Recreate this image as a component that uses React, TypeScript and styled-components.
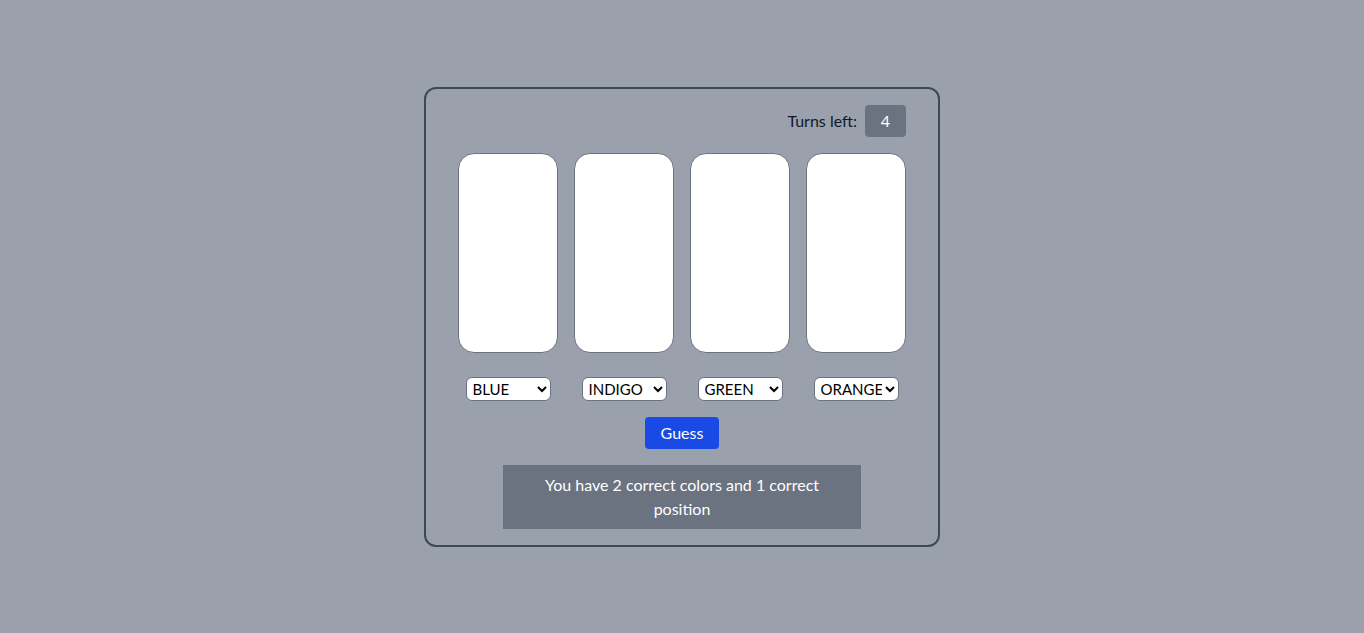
import React, { useState } from 'react';
import styled, { createGlobalStyle } from 'styled-components';

const GlobalStyle = createGlobalStyle`
  body {
    margin: 0;
    padding: 0;
    font-family: Lato, 'Noto Sans', sans-serif;
    background: #9aa1ad;
    color: #111827;
  }
`;

const Page = styled.div`
  min-height: 100vh;
  display: flex;
  align-items: center;
  justify-content: center;
`;

const Board = styled.div`
  width: 512px;
  box-sizing: content-box;
  border: 2px solid #3f4856;
  border-radius: 12px;
  padding: 16px 0;
  display: flex;
  flex-direction: column;
  align-items: center;
  gap: 16px;
`;

const TopBar = styled.div`
  align-self: stretch;
  display: flex;
  justify-content: flex-end;
  align-items: center;
  gap: 8px;
  padding: 0 32px;
  font-size: 16px;
`;

const TurnsBadge = styled.span`
  background: #6b7280;
  color: #fff;
  border-radius: 4px;
  width: 41px;
  height: 32px;
  display: flex;
  align-items: center;
  justify-content: center;
`;

const SlotGrid = styled.div`
  align-self: stretch;
  display: grid;
  grid-template-columns: repeat(4, 1fr);
  column-gap: 16px;
  padding: 0 32px;
  justify-items: center;
`;

const Slot = styled.div<{ $color: string }>`
  width: 100%;
  height: 200px;
  box-sizing: border-box;
  background: ${(p) => p.$color};
  border: 1px solid #6b7280;
  border-radius: 16px;
`;

const PickerRow = styled(SlotGrid)`
  margin-top: 8px;
`;

const Picker = styled.select`
  width: 85px;
  height: 24px;
  font-family: Lato, 'Noto Sans', sans-serif;
  font-size: 15px;
  color: #000;
  background: #fff;
  border: 1px solid #6b7280;
  border-radius: 6px;
  padding: 0 0 0 2px;
`;

const GuessButton = styled.button`
  background: #1a4ae6;
  color: #fff;
  border: none;
  border-radius: 4px;
  height: 32px;
  padding: 0 16px;
  font-family: Lato, 'Noto Sans', sans-serif;
  font-size: 16px;
  cursor: pointer;
`;

const Feedback = styled.div`
  width: 358px;
  box-sizing: border-box;
  background: #6b7280;
  color: #fff;
  text-align: center;
  padding: 8px 36px;
  font-size: 16px;
  line-height: 24px;
`;

const COLORS = ['RED', 'ORANGE', 'YELLOW', 'GREEN', 'BLUE', 'INDIGO', 'VIOLET'];

export default function App() {
  const [picks, setPicks] = useState(['BLUE', 'INDIGO', 'GREEN', 'ORANGE']);

  const setPick = (i: number, v: string) => {
    setPicks((prev) => prev.map((p, j) => (j === i ? v : p)));
  };

  return (
    <>
      <GlobalStyle />
      <Page>
        <Board>
          <TopBar>
            <span>Turns left:</span>
            <TurnsBadge>4</TurnsBadge>
          </TopBar>
          <SlotGrid>
            {picks.map((_, i) => (
              <Slot key={i} $color="#fff" />
            ))}
          </SlotGrid>
          <PickerRow>
            {picks.map((p, i) => (
              <Picker key={i} value={p} onChange={(e) => setPick(i, e.target.value)}>
                {COLORS.map((c) => (
                  <option key={c} value={c}>
                    {c}
                  </option>
                ))}
              </Picker>
            ))}
          </PickerRow>
          <GuessButton>Guess</GuessButton>
          <Feedback>You have 2 correct colors and 1 correct position</Feedback>
        </Board>
      </Page>
    </>
  );
}
